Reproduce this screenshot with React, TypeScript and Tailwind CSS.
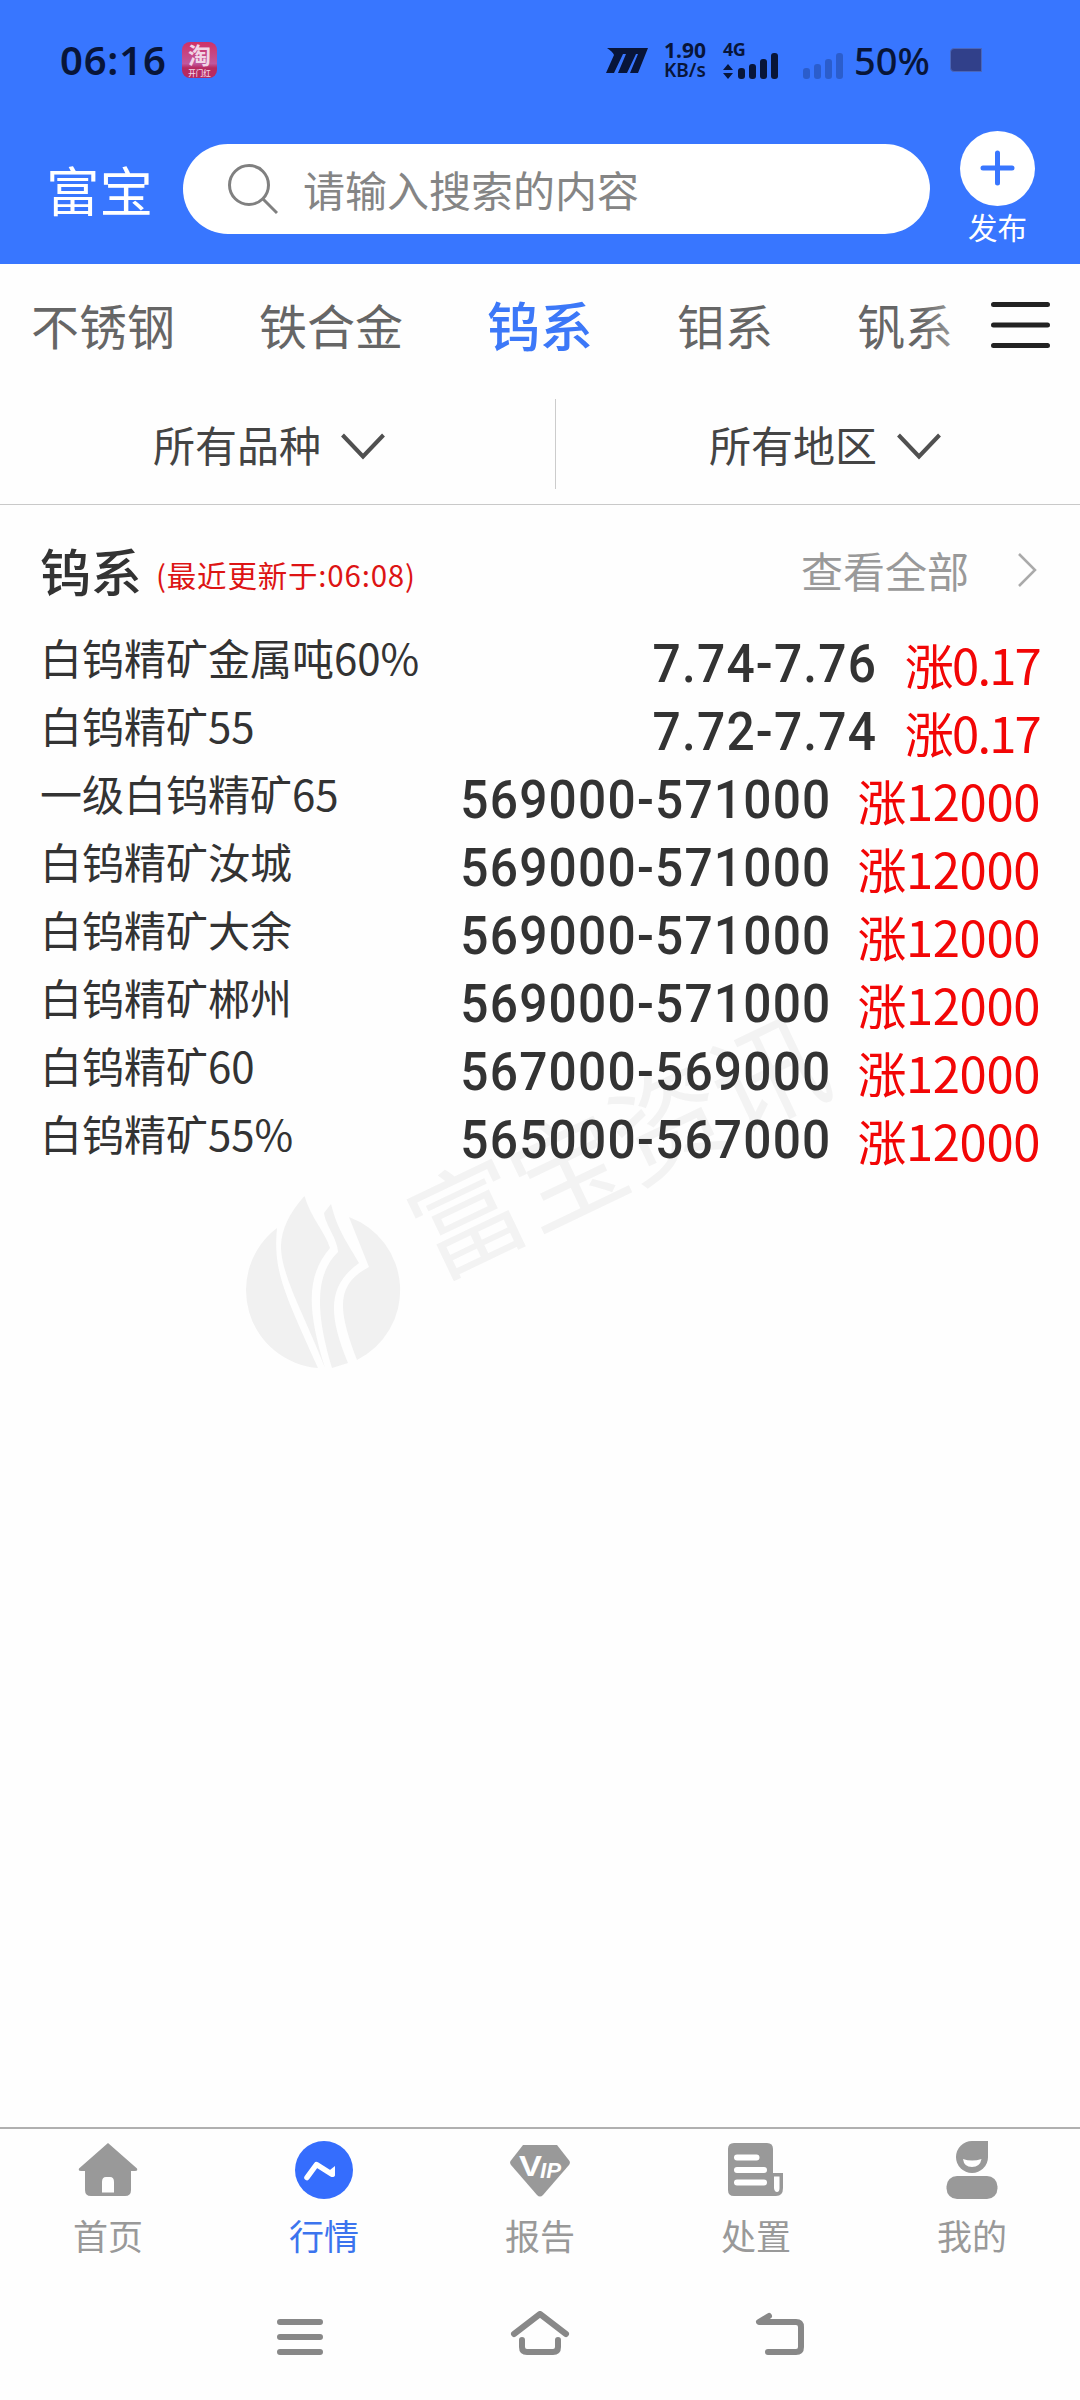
import { useState } from 'react';

const CATEGORIES = ['不锈钢', '铁合金', '钨系', '钼系', '钒系'];

const QUOTES = [
  { name: '白钨精矿金属吨60%', price: '7.74-7.76', change: '涨0.17' },
  { name: '白钨精矿55', price: '7.72-7.74', change: '涨0.17' },
  { name: '一级白钨精矿65', price: '569000-571000', change: '涨12000' },
  { name: '白钨精矿汝城', price: '569000-571000', change: '涨12000' },
  { name: '白钨精矿大余', price: '569000-571000', change: '涨12000' },
  { name: '白钨精矿郴州', price: '569000-571000', change: '涨12000' },
  { name: '白钨精矿60', price: '567000-569000', change: '涨12000' },
  { name: '白钨精矿55%', price: '565000-567000', change: '涨12000' },
];

const NAV = [
  { key: 'home', label: '首页', Icon: HomeIcon },
  { key: 'market', label: '行情', Icon: MarketIcon },
  { key: 'report', label: '报告', Icon: VipIcon },
  { key: 'disposal', label: '处置', Icon: DisposalIcon },
  { key: 'me', label: '我的', Icon: UserIcon },
];

function HomeIcon() {
  return (
    <svg width="60" height="60" viewBox="0 0 60 60" fill="#999">
      <path d="M30 2 59 27.5Q60 30 57 30H53V49Q53 55 47 55H13Q7 55 7 49V30H3Q0 30 1 27.5ZM24 51.500H36V41Q36 36 32 36H28Q24 36 24 41Z" fillRule="evenodd" />
    </svg>
  );
}

function MarketIcon() {
  return (
    <svg width="60" height="60" viewBox="0 0 60 60">
      <circle cx="30" cy="29" r="29" fill="#356dfd" />
      <path d="M13 36.500 22.500 23.500 37.500 33" fill="none" stroke="#fff" strokeWidth="5.500" strokeLinecap="round" strokeLinejoin="round" />
      <path d="M34 30.500 41 25V34Q41 36 38 36Z" fill="#fff" />
    </svg>
  );
}

function VipIcon() {
  return (
    <svg width="60" height="60" viewBox="0 0 60 60">
      <path d="M13 4H47L59.500 20Q60.500 22 59 24L33 54Q30 57 27 54L1 24Q-.5 22 .5 20Z" fill="#999" />
      <g fill="#fff" className="font-['Liberation_Sans',sans-serif]">
        <text x="9" y="35" fontSize="29" textLength="23" lengthAdjust="spacingAndGlyphs" className="font-bold">V</text>
        <text x="30" y="37" fontSize="22" textLength="21" lengthAdjust="spacingAndGlyphs" className="font-bold italic">IP</text>
      </g>
    </svg>
  );
}

function DisposalIcon() {
  return (
    <svg width="60" height="60" viewBox="0 0 60 60">
      <path d="M8 2H41Q47 2 47 8V32H57V47Q57 55 50 55H8Q2 55 2 49V8Q2 2 8 2Z" fill="#999" />
      <path d="M48 35.500H53.500V47Q53.500 51 51 51T48 47Z" fill="#fff" />
      <path d="M11 16.500H30.500M11 29H38M11 41.500H38" stroke="#fff" strokeWidth="6" strokeLinecap="round" />
    </svg>
  );
}

function UserIcon() {
  return (
    <svg width="60" height="60" viewBox="0 0 60 60">
      <path d="M30 0H46V16A16 16 0 1 1 30 0Z" fill="#999" />
      <path d="M21 18Q30 21 39.500 18Q38 26 30 26T21 18Z" fill="#fff" />
      <rect x="4.500" y="35" width="51" height="23" rx="10.500" fill="#999" />
    </svg>
  );
}

function Chevron() {
  return (
    <svg width="44" height="27" viewBox="0 0 44 27" fill="none" stroke="#505050" strokeWidth="4" className="mt-1">
      <path d="M1.500 2 22 23.500 42.500 2" />
    </svg>
  );
}

function SignalBars({ className }: { className?: string }) {
  return (
    <svg width="41" height="26" viewBox="0 0 41 26" fill="#081539" className={className}>
      <rect x="0" y="15" width="7" height="11" rx="3" />
      <rect x="11" y="11" width="7" height="15" rx="3" />
      <rect x="22" y="6" width="7" height="20" rx="3" />
      <rect x="33" y="0" width="7" height="26" rx="3" />
    </svg>
  );
}

function StatusBar() {
  return (
    <div className="flex h-[120px] items-center pl-[60px] font-['Noto_Sans',sans-serif] text-[#081539]">
      <span className="w-[122px] text-[40px] font-semibold leading-none tracking-[0.8px]">06:16</span>
      <svg width="35" height="36" viewBox="0 0 35 36" className="overflow-visible font-['Noto_Sans_CJK_SC',sans-serif]">
        <defs>
          <linearGradient id="promo" x1="0" y1="0" x2="0" y2="1">
            <stop offset="0" stopColor="#cf3165" />
            <stop offset=".6" stopColor="#c0579c" />
            <stop offset=".72" stopColor="#b72a60" />
            <stop offset="1" stopColor="#b72a60" />
          </linearGradient>
        </defs>
        <rect width="35" height="36" rx="8" fill="url(#promo)" />
        <g fill="#f1d5e6" textAnchor="middle">
          <text x="17.500" y="22" fontSize="23" className="font-bold">淘</text>
          <text x="17.500" y="34" fontSize="7.500" className="font-medium">开门红</text>
        </g>
      </svg>
      <svg width="42" height="25" viewBox="0 0 42 25" fill="#081539" className="ml-[389px]">
        <path d="M1 0H42L32 25H24L32 6H30L21 25H12L20 6H17L8 25H0L8 7Q7 4 1 0Z" />
      </svg>
      <div className="ml-4 w-[59px] text-[21px] font-bold leading-[20px]">
        <div>1.90</div>
        <div className="text-[19px] font-semibold">KB/s</div>
      </div>
      <div className="flex h-[38px] w-[56px] flex-col justify-between">
        <span className="text-[18px] font-bold leading-[16px] tracking-[-0.5px]">4G</span>
        <svg width="10" height="15" viewBox="0 0 10 15" fill="#081539" className="shrink-0">
          <path d="M5 0 10 6H0ZM5 15 0 9H10Z" />
        </svg>
      </div>
      <SignalBars className="-ml-[41px] mt-3" />
      <SignalBars className="ml-6 mt-3 opacity-25" />
      <span className="ml-2.5 w-[96px] text-[38px] font-medium leading-none">50%</span>
      <span className="h-6 w-8 rounded-l-sm border border-[#4a66ba] bg-[#31408a]" />
    </div>
  );
}

function Watermark() {
  return (
    <svg className="pointer-events-none absolute left-0 top-[900px] overflow-visible" width="1080" height="500" viewBox="0 900 1080 500" fill="#f1f1f1">
      <path d="M277 1228C273 1270 283 1290 318 1368A78 78 0 0 1 277 1228Z" />
      <path d="M304.500 1196C311 1218 325 1232 330 1248C306 1276 307 1310 325 1368C306 1318 280 1274 281 1245Q282 1221 304.500 1196Z" />
      <path d="M331 1204C338 1232 349 1245 359 1263C330 1284 326 1310 348 1363L332 1368C316 1315 314 1275 338 1252C338 1240 325 1224 324 1213Z" />
      <path d="M349 1217A78 78 0 0 1 357 1360C338 1310 335 1285 369 1267Z" />
      <text
        x="0"
        y="0"
        fontSize="112"
        letterSpacing="-1"
        fill="#f3f3f3"
        transform="translate(435 1280) rotate(-25.500)"
        className="font-['Noto_Sans_CJK_SC',sans-serif]"
      >
        富宝资讯
      </text>
    </svg>
  );
}

export default function App() {
  const [category, setCategory] = useState('钨系');
  const [tab, setTab] = useState('market');

  return (
    <div className="relative flex h-[2400px] w-[1080px] flex-col overflow-hidden bg-[#fefefe] font-['Noto_Sans_CJK_SC',sans-serif] text-[#333]">
      <Watermark />

      <header className="h-[264px] shrink-0 bg-[#3876ff]">
        <StatusBar />
        <div className="flex pl-[46px]">
          <span className="mt-[41px] w-[137px] text-[53.5px] leading-[56px] text-white">富宝</span>
          <div className="mt-6 flex h-[90px] w-[747px] items-center rounded-full bg-white pl-[45px]">
            <svg width="50" height="52" viewBox="0 0 50 52" fill="none" stroke="#808080" strokeWidth="3">
              <circle cx="21" cy="22" r="19.500" />
              <path d="M35 36 49 50" />
            </svg>
            <input
              className="ml-[25px] w-[500px] bg-transparent text-[42px] leading-[60px] outline-none placeholder:text-[#858585]"
              placeholder="请输入搜索的内容"
            />
          </div>
          <button type="button" className="ml-[30px] mt-[11px] flex w-[75px] flex-col items-center text-white">
            <svg width="75" height="75" viewBox="0 0 75 75">
              <circle cx="37.500" cy="37.500" r="37.500" fill="#fff" />
              <path d="M37.500 22V52M23 37H52" stroke="#3876ff" strokeWidth="5" strokeLinecap="round" />
            </svg>
            <span className="mt-1 text-[29.5px] leading-[32px]">发布</span>
          </button>
        </div>
      </header>

      <nav className="relative flex h-[126px] shrink-0 items-center gap-[84px] pb-[7px] pl-[31px] text-[48px] leading-[60px] text-[#666]">
        {CATEGORIES.map((c) => (
          <button
            key={c}
            type="button"
            onClick={() => setCategory(c)}
            className={c === category ? 'shrink-0 text-[53px] font-medium text-[#3c78f8]' : 'shrink-0'}
          >
            {c}
          </button>
        ))}
        <div className="absolute right-0 top-0 flex h-full w-[160px] items-center justify-end bg-gradient-to-r from-white/0 to-[#fefefe] to-60% pb-1 pr-[30px]">
          <svg width="59" height="46" viewBox="0 0 59 46" stroke="#222" strokeWidth="5" strokeLinecap="round">
            <path d="M2.500 2.500H56.500M2.500 23H56.500M2.500 43.500H56.500" />
          </svg>
        </div>
      </nav>

      <div className="flex h-[115px] shrink-0 items-start border-b border-[#c9c9c9] pt-[9px] text-[42px] leading-[60px] text-[#444]">
        <button type="button" className="flex h-[90px] w-[556px] items-center gap-5 border-r border-[#ccc] pl-[153px]">
          所有品种
          <Chevron />
        </button>
        <button type="button" className="flex h-[90px] flex-1 items-center gap-5 pl-[153px]">
          所有地区
          <Chevron />
        </button>
      </div>

      <main className="relative flex-1 px-10 pt-[35px]">
        <div className="flex h-[61px] items-center">
          <h2 className="text-[51px] font-medium leading-none">钨系</h2>
          <span className="ml-[14px] mt-2 text-[29.5px] leading-none tracking-[0.8px] text-[#dd1414]">(最近更新于:06:08)</span>
          <span className="mb-0.5 ml-auto mr-[48px] text-[42px] leading-none text-[#999]">查看全部</span>
          <svg width="20" height="34" viewBox="0 0 20 34" fill="none" stroke="#aaa" strokeWidth="2.500" className="mb-0.5 mr-[3px]">
            <path d="M2 1 18 17 2 33" />
          </svg>
        </div>
        <ul className="mt-[22px]">
          {QUOTES.map((q) => {
            const decimal = q.change.includes('.');
            return (
              <li key={q.name} className="flex h-[68px] items-center">
                <span className="text-[42px] leading-none">{q.name}</span>
                <span className="ml-auto mt-[13px] origin-right scale-x-[.92] font-['Roboto',sans-serif] text-[54px] font-medium leading-none tracking-[1.3px]">
                  {q.price}
                </span>
                <span
                  className={`mt-[12px] text-[49px] leading-none text-[#f20606] ${
                    decimal ? 'ml-[28px] tracking-[-1.8px]' : 'ml-[26px] tracking-[-0.4px]'
                  }`}
                >
                  {q.change}
                </span>
              </li>
            );
          })}
        </ul>
      </main>

      <footer className="h-[273px] shrink-0 border-t-2 border-[#b0b0b0]">
        <div className="grid h-[150px] grid-cols-5 text-[35px] leading-[52px]">
          {NAV.map(({ key, label, Icon }) => (
            <button
              key={key}
              type="button"
              onClick={() => setTab(key)}
              className={`flex flex-col items-center pt-3 ${key === tab ? 'text-[#3c74ee]' : 'text-[#999]'}`}
            >
              <Icon />
              <span className="mt-2">{label}</span>
            </button>
          ))}
        </div>
        <div className="flex items-center justify-center gap-[180px] pt-8">
          <svg width="60" height="46" viewBox="0 0 60 46" stroke="#888" strokeWidth="6" strokeLinecap="round">
            <path d="M10 11H50M10 26H50M10 41H50" />
          </svg>
          <svg width="60" height="46" viewBox="0 0 60 46" fill="none" stroke="#888" strokeWidth="6" strokeLinecap="round" strokeLinejoin="round">
            <path d="M4 23 30 3 56 23M12 29V36Q12 41 17 41H43Q48 41 48 36V29" />
          </svg>
          <svg width="60" height="46" viewBox="0 0 60 46" fill="none" stroke="#888" strokeWidth="6" strokeLinecap="round" strokeLinejoin="round">
            <path d="M19 5 9 11H46Q51 11 51 16V36Q51 41 46 41H18" />
          </svg>
        </div>
      </footer>
    </div>
  );
}
